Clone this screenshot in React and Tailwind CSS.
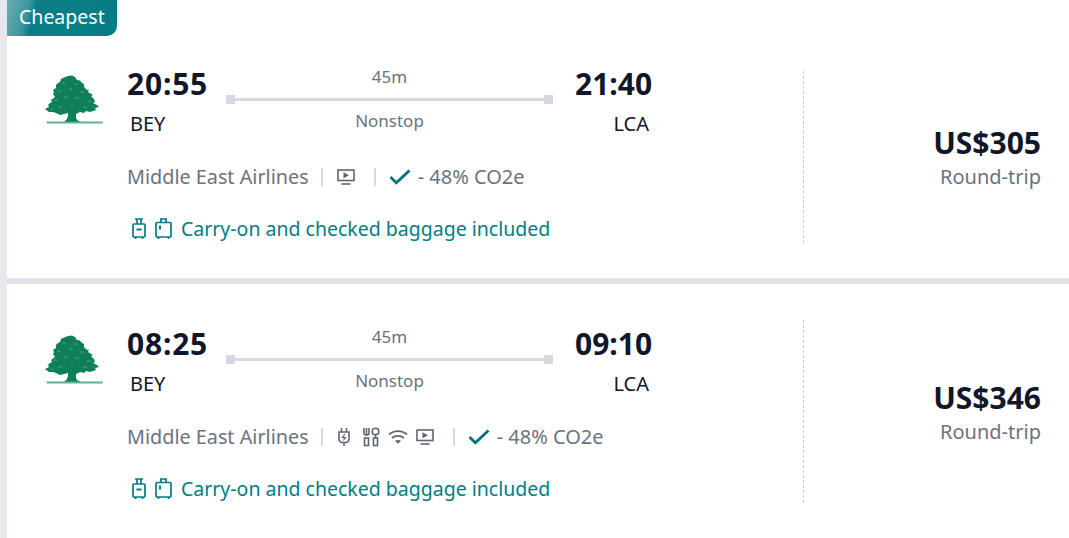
function CedarLogo() {
  return (
    <svg width="60" height="50" viewBox="0 0 60 50" className="block">
      <path
        fill="#0e7f57"
        d="M24 2L28 1.500L31 3L33 6L36 6.500L38 9L40 10L40 13L43 16L45 15.500L44 18L49 21L47 22L50 25L51 28L49 29L53 31L55 33L51 34L52 36L46 38L42 37L40 39L36 38L32 40L32 44L33 46L37 48L20 48L23 45L24 42L24 39L20 40L16 41L12 39L9 38L5 38L1 35L5 33L4 31L6 29L8 28L7 26L11 23L9 20L10 18L9 16L12 14L12 11L14 9L16 8L17 5L19 4Z"
      />
      <g fill="#ffffff" opacity="0.3">
        <ellipse cx="20" cy="9" rx="2" ry="0.5" />
        <ellipse cx="32" cy="10" rx="1.800" ry="0.5" />
        <ellipse cx="15" cy="17" rx="2.400" ry="0.5" />
        <ellipse cx="27" cy="15" rx="1.800" ry="0.5" />
        <ellipse cx="38" cy="18" rx="2.400" ry="0.5" />
        <ellipse cx="12" cy="26" rx="2.600" ry="0.5" />
        <ellipse cx="22" cy="23" rx="2" ry="0.6" />
        <ellipse cx="33" cy="24" rx="2.200" ry="0.5" />
        <ellipse cx="45" cy="27" rx="2.600" ry="0.5" />
        <ellipse cx="16" cy="33" rx="2.400" ry="0.5" />
        <ellipse cx="28" cy="31" rx="1.400" ry="0.5" />
        <ellipse cx="41" cy="33" rx="2.400" ry="0.5" />
        <ellipse cx="8" cy="35" rx="1.800" ry="0.4" />
        <ellipse cx="49" cy="33" rx="1.600" ry="0.4" />
      </g>
      <rect x="2.700" y="47.500" width="56" height="2" fill="#63b193" />
    </svg>
  );
}

function CarryOn() {
  return (
    <svg width="14" height="22" viewBox="0 0 14 22" fill="none" stroke="currentColor" strokeWidth="1.700">
      <path d="M3 1h8M5 1v5M9 1v5" />
      <rect x="1" y="6" width="12" height="13" rx="1" />
      <path d="M4.500 11.500h5" strokeWidth="2" />
      <path d="M3.500 19v2M10.500 19v2" />
    </svg>
  );
}

function Checked() {
  return (
    <svg width="17" height="22" viewBox="0 0 17 22" fill="none" stroke="currentColor" strokeWidth="1.700">
      <path d="M5 1h7M6 1v4M11 1v4" />
      <rect x="1" y="4.500" width="15" height="14.500" rx="1" />
      <path d="M5 7.500v4" strokeWidth="2" />
      <path d="M3.500 19v2M13.500 19v2" />
    </svg>
  );
}

function Plug() {
  return (
    <svg width="14" height="20" viewBox="0 0 14 20" fill="none" stroke="currentColor" strokeWidth="1.600">
      <path d="M4.500 1v4M9.500 1v4" />
      <path d="M2 5h10v7a3.500 3.500 0 0 1-3.500 3.500h-3A3.500 3.500 0 0 1 2 12z" />
      <path d="M7 15.500V19" />
      <path d="M7.800 7L5.500 10.500h3L6.300 13.500" strokeWidth="1.200" />
    </svg>
  );
}

function Meal() {
  return (
    <svg width="17" height="20" viewBox="0 0 17 20" fill="none" stroke="currentColor" strokeWidth="1.600">
      <path d="M1 1v5a2 2 0 0 0 2 2h1a2 2 0 0 0 2-2V1M3.500 1v7" />
      <rect x="1.500" y="11" width="4" height="7.500" />
      <circle cx="12.500" cy="4.500" r="3.300" />
      <rect x="10.500" y="11" width="4" height="7.500" />
      <path d="M12.500 8v3" />
    </svg>
  );
}

function Wifi() {
  return (
    <svg width="20" height="16" viewBox="0 0 20 16" fill="none" stroke="currentColor" strokeWidth="1.700">
      <path d="M1 5.500C6 1 14 1 19 5.500" />
      <path d="M4 9c3.500-2.800 8.500-2.800 12 0" />
      <path d="M7 11.800c1.700-1.100 4.300-1.100 6 0L10 14.800z" fill="currentColor" stroke="none" />
    </svg>
  );
}

function Screen() {
  return (
    <svg width="18" height="17" viewBox="0 0 18 17" fill="none" stroke="currentColor" strokeWidth="1.600">
      <rect x="1" y="1" width="16" height="10.500" />
      <path d="M6.500 3.300l5.500 3-5.500 3z" fill="currentColor" stroke="none" />
      <path d="M4.500 15h9" />
    </svg>
  );
}

function Check() {
  return (
    <svg width="22" height="16" viewBox="0 0 22 16" fill="none" stroke="#00727b" strokeWidth="2.800">
      <path d="M1.500 8l5.800 5.800L20.500 1.500" />
    </svg>
  );
}

function FlightCard({ depart, arrive, price, amenities, tag, boxClass, logoClass, bodyClass }) {
  return (
    <div className="bg-white">
      {tag && (
        <div className="h-[36px] w-[110px] rounded-br-[10px] bg-[linear-gradient(106deg,#6aaeb2_0px,#3d979d_22px,#0b7f88_30px,#047c85_100%)] text-white text-[19.500px] leading-[34px] pl-[12px]">
          Cheapest
        </div>
      )}
      <div className={`flex pl-[37px] pr-[28px] ${boxClass}`}>
        <div className="w-[759px] flex shrink-0">
          <div className={`w-[83px] shrink-0 ${logoClass}`}>
            <CedarLogo />
          </div>
          <div className={bodyClass}>
            <div className="flex">
              <div className="w-[99px]">
                <div className="text-[30px] leading-[26px] font-bold text-[#11162b] tracking-[0.8px]">{depart}</div>
                <div className="text-[20px] leading-[26px] mt-[14px] pl-[3px] text-[#11162b]">BEY</div>
              </div>
              <div className="w-[327px] text-center text-[17px] text-[#6b7280]">
                <div className="leading-[24px] -mt-[6px]">45m</div>
                <div className="flex items-center mt-[6px] mb-[5px]">
                  <div className="w-[9px] h-[9px] bg-[#d5d7e1]" />
                  <div className="flex-1 h-[3px] bg-[#d5d7e1]" />
                  <div className="w-[9px] h-[9px] bg-[#d5d7e1]" />
                </div>
                <div className="leading-[24px]">Nonstop</div>
              </div>
              <div className="w-[77px] ml-[22px]">
                <div className="text-[30px] leading-[26px] font-bold text-[#11162b]">{arrive}</div>
                <div className="text-[20px] leading-[26px] mt-[14px] pr-[3px] text-right text-[#11162b]">LCA</div>
              </div>
            </div>
            <div className="flex items-center h-[26px] mt-[27px] text-[20px] text-[#6b7280]">
              <span className="text-[19.800px]">Middle East Airlines</span>
              <div className="w-[2px] h-[18px] bg-[#d5d7e1] ml-[12px]" />
              <div className="flex items-center gap-[8px] ml-[14px] text-[#5f6672]">{amenities}</div>
              <div className="w-[2px] h-[18px] bg-[#d5d7e1] ml-[19px] mr-[13px]" />
              <Check />
              <span className="ml-[7px]">- 48% CO2e</span>
            </div>
            <div className="flex items-center h-[26px] mt-[26px] text-[19.500px] text-[#007d85]">
              <span className="ml-[5px] flex"><CarryOn /></span>
              <span className="ml-[9px] flex"><Checked /></span>
              <span className="ml-[9px]">Carry-on and checked baggage included</span>
            </div>
          </div>
        </div>
        <div className="flex-1 border-l border-dashed border-[#c9ccd6] flex flex-col items-end justify-center pt-[3px]">
          <div className="text-[30px] leading-[34px] mb-[3px] font-bold text-[#11162b]">{price}</div>
          <div className="text-[20px] leading-[28px] text-[#6b7280]">Round-trip</div>
        </div>
      </div>
    </div>
  );
}

export default function App() {
  return (
    <div className="w-[1069px] h-[538px] overflow-hidden bg-[#e6e8ee] pl-[7px] font-['Noto_Sans',sans-serif]">
      <div className="flex flex-col gap-[6px] bg-[#e0e2e9]">
        <FlightCard
          tag
          depart="20:55"
          arrive="21:40"
          price="US$305"
          amenities={<Screen />}
          boxClass="h-[242px] pt-[35px] pb-[35px]"
          logoClass="pt-[3px]"
          bodyClass="pt-[0px]"
        />
        <FlightCard
          depart="08:25"
          arrive="09:10"
          price="US$346"
          amenities={
            <>
              <span className="flex mr-[4px]"><Plug /></span>
              <Meal />
              <Wifi />
              <Screen />
            </>
          }
          boxClass="h-[254px] pt-[36px] pb-[35px]"
          logoClass="pt-[14px]"
          bodyClass="pt-[11px]"
        />
      </div>
    </div>
  );
}
